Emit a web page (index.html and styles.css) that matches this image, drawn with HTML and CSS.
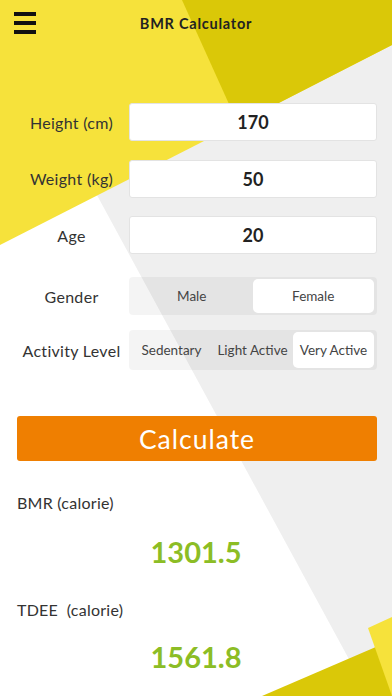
FILE: index.html
```html
<!DOCTYPE html>
<html lang="en">
<head>
<meta charset="utf-8">
<title>BMR Calculator</title>
<link rel="stylesheet" href="styles.css">
</head>
<body>
<div class="screen">
  <svg class="bg" viewBox="0 0 392 696" width="392" height="696" aria-hidden="true">
    <rect x="0" y="0" width="392" height="696" fill="#ffffff"/>
    <polygon points="-9,0 392,0 392,696 369,696" fill="#efefef"/>
    <polygon points="0,0 392,0 392,45 0,245" fill="#f6e23b"/>
    <polygon points="182,0 392,0 392,45 238,124" fill="#dac808"/>
    <polygon points="262,696 392,640 392,696" fill="#dac808"/>
    <polygon points="368,628 392,617 392,696" fill="#f6e23b"/>
  </svg>

  <header class="topbar">
    <button class="menu" aria-label="Menu"><span></span><span></span><span></span></button>
    <h1 class="title">BMR Calculator</h1>
  </header>

  <main class="form">
    <div class="fields">
      <div class="row">
        <span class="label">Height (cm)</span>
        <div class="field">170</div>
      </div>
      <div class="row">
        <span class="label">Weight (kg)</span>
        <div class="field">50</div>
      </div>
      <div class="row">
        <span class="label">Age</span>
        <div class="field">20</div>
      </div>
    </div>
    <div class="choices">
      <div class="row">
        <span class="label">Gender</span>
        <div class="seg seg-2">
          <span class="opt">Male</span>
          <span class="opt on">Female</span>
        </div>
      </div>
      <div class="row row-tall">
        <span class="label">Activity Level</span>
        <div class="seg seg-3">
          <span class="opt">Sedentary</span>
          <span class="opt">Light Active</span>
          <span class="opt on">Very Active</span>
        </div>
      </div>
    </div>
  </main>

  <button class="calc">Calculate</button>

  <section class="results">
    <div class="res-label">BMR (calorie)</div>
    <div class="res-value bmr">1301.5</div>
    <div class="res-label tdee-label">TDEE&nbsp; (calorie)</div>
    <div class="res-value tdee">1561.8</div>
  </section>
</div>
</body>
</html>
```
FILE: styles.css
```css
* { box-sizing: border-box; }
html, body { margin: 0; padding: 0; }
body {
  font-family: "Lato", "Noto Sans", sans-serif;
  color: #333;
}
.screen {
  position: relative;
  width: 392px;
  height: 696px;
  overflow: hidden;
}
.bg {
  position: absolute;
  left: 0;
  top: 0;
  z-index: 0;
}
.topbar, .form, .calc, .results { position: relative; z-index: 1; }

.topbar {
  height: 46px;
  display: flex;
  align-items: center;
  justify-content: center;
}
.menu {
  position: absolute;
  left: 14px;
  top: 11.5px;
  width: 22px;
  height: 22px;
  padding: 0;
  border: 0;
  background: transparent;
  display: flex;
  flex-direction: column;
  justify-content: space-between;
}
.menu span {
  display: block;
  height: 4px;
  width: 22px;
  background: #111;
}
.title {
  margin: 0;
  font-size: 14.5px;
  font-weight: 700;
  color: #222;
  letter-spacing: 0.75px;
}

.form {
  padding: 57px 15px 0 15px;
}
.fields {
  display: flex;
  flex-direction: column;
  gap: 18.5px;
}
.choices {
  display: flex;
  flex-direction: column;
  gap: 15px;
  margin-top: 23px;
}
.row {
  display: grid;
  grid-template-columns: 113px 1fr;
  column-gap: 1px;
  align-items: center;
  height: 38px;
}
.row-tall { height: 40px; }
.label {
  text-align: center;
  font-size: 16px;
  color: #333;
  letter-spacing: 0.3px;
  white-space: nowrap;
}
.field {
  height: 38px;
  background: #fff;
  border: 1px solid #e3e3e3;
  border-radius: 3px;
  display: flex;
  align-items: center;
  justify-content: center;
  font-size: 18px;
  font-weight: 700;
  color: #222;
}
.seg {
  height: 100%;
  background: rgba(0, 0, 0, 0.045);
  border-radius: 4px;
  padding: 2px 3px 2px 2px;
  display: grid;
  grid-auto-flow: column;
  grid-auto-columns: 1fr;
}
.opt {
  display: flex;
  align-items: center;
  justify-content: center;
  font-size: 13.5px;
  color: #444;
  border-radius: 5px;
  white-space: nowrap;
}
.opt.on { background: #fff; }

.calc {
  display: block;
  width: 360px;
  height: 45px;
  margin: 46px 15px 0 17px;
  border: 0;
  border-radius: 3px;
  background: #ef7f01;
  color: #fff;
  font-family: "Lato", "Noto Sans", sans-serif;
  font-size: 26.5px;
  font-weight: 400;
  letter-spacing: 1px;
  padding: 0;
}

.results {
  padding: 0 17px;
}
.res-label {
  margin-top: 32px;
  font-size: 16px;
  line-height: 20px;
  letter-spacing: 0.25px;
  color: #333;
}
.res-value {
  text-align: center;
  font-size: 29px;
  line-height: 36px;
  font-weight: 700;
  color: #8cbd25;
  margin-top: 20.7px;
}
.tdee-label { margin-top: 30.6px; }
.res-value.tdee { margin-top: 18.4px; }
```
